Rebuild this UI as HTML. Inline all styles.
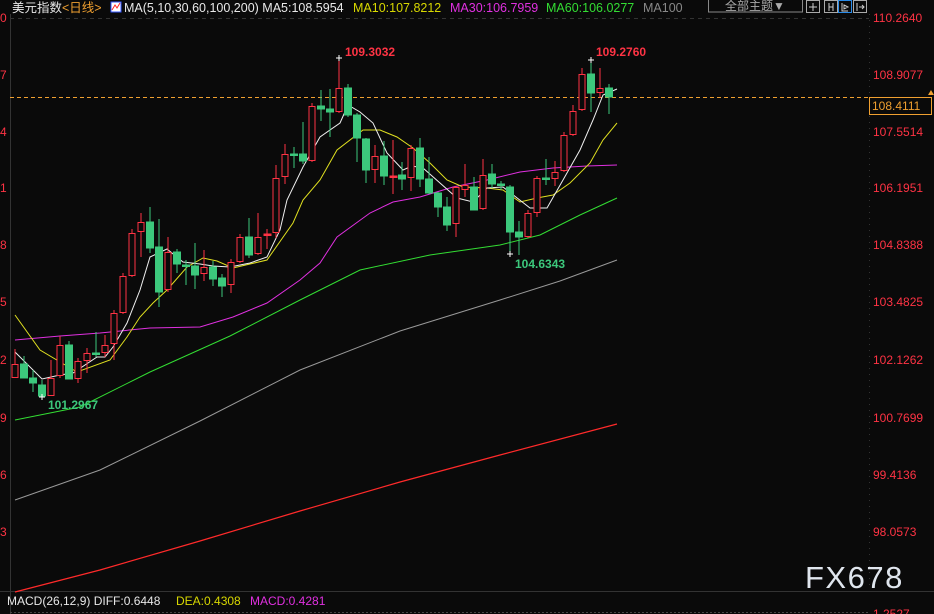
<!DOCTYPE html>
<html><head><meta charset="utf-8"><style>
html,body{margin:0;padding:0;background:#0a0a0a;width:934px;height:614px;overflow:hidden}
svg{display:block}
text{font-family:"Liberation Sans","Noto Sans CJK SC",sans-serif}
</style></head><body>
<svg width="934" height="614" viewBox="0 0 934 614" xmlns="http://www.w3.org/2000/svg">
<rect width="934" height="614" fill="#0a0a0a"/>
<text x="12" y="12" font-size="12.5" fill="#e8e8e8">美元指数</text>
<text x="62" y="12" font-size="12.5" fill="#f0a030">&lt;日线&gt;</text>
<rect x="111" y="2" width="10" height="10" fill="#fff" stroke="#3355ff"/>
<polyline points="112,10 115,5 117,8 120,3" fill="none" stroke="#ff2222"/>
<text x="124" y="12" font-size="12.5" fill="#e8e8e8">MA(5,10,30,60,100,200) MA5:108.5954</text>
<text x="353" y="12" font-size="12.5" fill="#d8d800">MA10:107.8212</text>
<text x="450" y="12" font-size="12.5" fill="#e030e0">MA30:106.7959</text>
<text x="546" y="12" font-size="12.5" fill="#33dd33">MA60:106.0277</text>
<text x="643" y="12" font-size="12.5" fill="#888">MA100</text>
<rect x="708.5" y="-1" width="94" height="13" fill="none" stroke="#888"/>
<text x="725" y="10" font-size="12" fill="#aaa">全部主题▼</text>
<rect x="806.5" y="0.5" width="13" height="12" fill="none" stroke="#aaa"/>
<rect x="824.5" y="0.5" width="13" height="12" fill="none" stroke="#aaa"/>
<rect x="838.5" y="0.5" width="13" height="12" fill="#0a0a0a" stroke="#2a8be8"/>
<rect x="853.5" y="0.5" width="13" height="12" fill="none" stroke="#aaa"/>
<path d="M813 3v8M809 7h8M829 3v8M833 3v8M829 7h4M842 3v8h6M844 5l4 2-4 2z" stroke="#ccc" fill="none"/>
<path d="M857 3v8M859 7h5M862 5l2 2-2 2" stroke="#ccc" fill="none"/>
<line x1="10.5" y1="14" x2="10.5" y2="614" stroke="#333"/>
<line x1="869.5" y1="14" x2="869.5" y2="590" stroke="#333" stroke-dasharray="1,5"/>
<line x1="10" y1="18.5" x2="869" y2="18.5" stroke="#333" stroke-dasharray="4,4"/>
<line x1="0" y1="591.5" x2="934" y2="591.5" stroke="#333"/>
<line x1="10" y1="612.5" x2="869" y2="612.5" stroke="#444" stroke-dasharray="2,2"/>
<g font-size="12" fill="#ff3344">
<text x="0" y="22">0</text><text x="0" y="79">7</text><text x="0" y="136">4</text><text x="0" y="192">1</text><text x="0" y="249">8</text><text x="0" y="306">5</text><text x="0" y="364">2</text><text x="0" y="422">9</text><text x="0" y="479">6</text><text x="0" y="536">3</text>
<text x="873" y="22">110.2640</text><text x="873" y="79">108.9077</text><text x="873" y="136">107.5514</text><text x="873" y="192">106.1951</text><text x="873" y="249">104.8388</text><text x="873" y="306">103.4825</text><text x="873" y="364">102.1262</text><text x="873" y="422">100.7699</text><text x="873" y="479">99.4136</text><text x="873" y="536">98.0573</text><text x="873" y="618">1.2527</text>
</g>
<line x1="10" y1="97.5" x2="869" y2="97.5" stroke="#f0a030" stroke-dasharray="4,3"/>
<rect x="869.5" y="97.5" width="62" height="17" fill="#0a0a0a" stroke="#f0a030"/>
<text x="872" y="110" font-size="12" fill="#f0a030">108.4111</text>
<path d="M928 95l3-5 3 5z" fill="#f0a030"/>
<polyline fill="none" stroke="#ff2a2a" stroke-width="1.2" points="15,592 100,570 200,541 300,511 400,482 500,455 617,424"/>
<polyline fill="none" stroke="#999" stroke-width="1" points="15,500 100,470 200,421 300,370 400,331 500,300 560,281 617,260"/>
<polyline fill="none" stroke="#33dd33" stroke-width="1" points="15,420 80,407 150,372 230,336 300,300 360,270 430,255 500,245 540,235 580,215 617,198"/>
<polyline fill="none" stroke="#e030e0" stroke-width="1" points="15,340 60,336 100,333 150,328 200,327 233,317 267,303 300,280 320,263 337,237 370,213 393,202 420,197 453,187 487,180 520,172 553,168 587,166 617,165"/>
<polyline fill="none" stroke="#e0e020" stroke-width="1" points="15,315 40,350 77,372 110,360 127,337 140,317 153,303 167,290 187,267 203,258 217,261 233,268 267,260 293,223 303,200 320,180 337,150 363,130 380,130 397,137 413,148 430,163 447,180 463,187 487,188 503,190 520,202 537,198 553,195 570,183 590,163 603,140 617,123"/>
<polyline fill="none" stroke="#f0f0f0" stroke-width="1" points="15,352 42,379 60,375 73,373 97,357 105,357 113,347 127,323 140,290 150,257 167,249 183,262 200,264 213,266 230,267 250,263 267,257 280,230 287,200 303,167 320,137 340,123 348,105 360,112 373,123 387,153 403,170 412,166 423,168 440,183 457,198 473,202 487,188 503,187 530,208 547,208 563,180 580,150 593,120 603,95 617,89"/>
<g stroke-width="1">
<g stroke="#ff3344" fill="#0a0a0a">
<line x1="15" y1="349" x2="15" y2="378"/><rect x="12" y="364.5" width="6" height="13"/>
<line x1="51" y1="360" x2="51" y2="396"/><rect x="48" y="378.5" width="6" height="17"/>
<line x1="60" y1="336" x2="60" y2="378"/><rect x="57" y="345.5" width="6" height="30"/>
<line x1="78" y1="358" x2="78" y2="383"/><rect x="75" y="361.5" width="6" height="17"/>
<line x1="87" y1="348" x2="87" y2="373"/><rect x="84" y="353.5" width="6" height="7"/>
<line x1="105" y1="335" x2="105" y2="357"/><rect x="102" y="345.5" width="6" height="7"/>
<line x1="114" y1="310" x2="114" y2="360"/><rect x="111" y="313.5" width="6" height="30"/>
<line x1="123" y1="273" x2="123" y2="314"/><rect x="120" y="276.5" width="6" height="36"/>
<line x1="132" y1="229" x2="132" y2="277"/><rect x="129" y="233.5" width="6" height="42"/>
<line x1="141" y1="213" x2="141" y2="257"/><rect x="138" y="222.5" width="6" height="9"/>
<line x1="168" y1="237" x2="168" y2="292"/><rect x="165" y="252.5" width="6" height="37"/>
<line x1="204" y1="250" x2="204" y2="281"/><rect x="201" y="267.5" width="6" height="6"/>
<line x1="231" y1="259" x2="231" y2="293"/><rect x="228" y="262.5" width="6" height="22"/>
<line x1="240" y1="234" x2="240" y2="263"/><rect x="237" y="237.5" width="6" height="24"/>
<line x1="258" y1="213" x2="258" y2="255"/><rect x="255" y="237.5" width="6" height="16"/>
<line x1="267" y1="229" x2="267" y2="249"/><rect x="264" y="234" width="7" height="1.5" fill="#ff3344"/>
<line x1="276" y1="165" x2="276" y2="238"/><rect x="273" y="178.5" width="6" height="54"/>
<line x1="285" y1="144" x2="285" y2="184"/><rect x="282" y="154.5" width="6" height="22"/>
<line x1="312" y1="103" x2="312" y2="162"/><rect x="309" y="106.5" width="6" height="54"/>
<line x1="339" y1="58" x2="339" y2="113"/><rect x="336" y="88.5" width="6" height="23"/>
<line x1="375" y1="145" x2="375" y2="183"/><rect x="372" y="156.5" width="6" height="13"/>
<line x1="393" y1="140" x2="393" y2="194"/><rect x="390" y="176" width="7" height="1.5" fill="#ff3344"/>
<line x1="411" y1="145" x2="411" y2="191"/><rect x="408" y="148.5" width="6" height="29"/>
<line x1="456" y1="186" x2="456" y2="237"/><rect x="453" y="187.5" width="6" height="36"/>
<line x1="465" y1="164" x2="465" y2="197"/><rect x="462" y="185.5" width="6" height="4"/>
<line x1="483" y1="159" x2="483" y2="210"/><rect x="480" y="175.5" width="6" height="33"/>
<line x1="528" y1="210" x2="528" y2="238"/><rect x="525" y="213.5" width="6" height="23"/>
<line x1="537" y1="176" x2="537" y2="217"/><rect x="534" y="178.5" width="6" height="34"/>
<line x1="555" y1="161" x2="555" y2="186"/><rect x="552" y="172.5" width="6" height="6"/>
<line x1="564" y1="132" x2="564" y2="172"/><rect x="561" y="135.5" width="6" height="35"/>
<line x1="573" y1="105" x2="573" y2="136"/><rect x="570" y="111.5" width="6" height="23"/>
<line x1="582" y1="68" x2="582" y2="111"/><rect x="579" y="74.5" width="6" height="35"/>
<line x1="600" y1="68" x2="600" y2="98"/><rect x="597" y="88.5" width="6" height="4"/>
</g>
<g stroke="#3cc87c" fill="#3cc87c">
<line x1="24" y1="356" x2="24" y2="378"/><rect x="20.5" y="364" width="7" height="14"/>
<line x1="33" y1="370" x2="33" y2="392"/><rect x="29.5" y="378" width="7" height="5"/>
<line x1="42" y1="380" x2="42" y2="397"/><rect x="38.5" y="385" width="7" height="11"/>
<line x1="69" y1="341" x2="69" y2="379"/><rect x="65.5" y="345" width="7" height="34"/>
<line x1="96" y1="332" x2="96" y2="357"/><rect x="92.5" y="353" width="7" height="1.5"/>
<line x1="150" y1="207" x2="150" y2="253"/><rect x="146.5" y="222" width="7" height="26"/>
<line x1="159" y1="219" x2="159" y2="307"/><rect x="155.5" y="247" width="7" height="45"/>
<line x1="177" y1="249" x2="177" y2="273"/><rect x="173.5" y="252" width="7" height="12"/>
<line x1="186" y1="260" x2="186" y2="285"/><rect x="182.5" y="265" width="7" height="1.5"/>
<line x1="195" y1="243" x2="195" y2="289"/><rect x="191.5" y="266" width="7" height="9"/>
<line x1="213" y1="261" x2="213" y2="286"/><rect x="209.5" y="267" width="7" height="12"/>
<line x1="222" y1="274" x2="222" y2="297"/><rect x="218.5" y="278" width="7" height="8"/>
<line x1="249" y1="218" x2="249" y2="258"/><rect x="245.5" y="237" width="7" height="18"/>
<line x1="294" y1="147" x2="294" y2="168"/><rect x="290.5" y="154" width="7" height="1.5"/>
<line x1="303" y1="122" x2="303" y2="164"/><rect x="299.5" y="154" width="7" height="7"/>
<line x1="321" y1="90" x2="321" y2="121"/><rect x="317.5" y="106" width="7" height="3"/>
<line x1="330" y1="89" x2="330" y2="137"/><rect x="326.5" y="109" width="7" height="3"/>
<line x1="348" y1="84" x2="348" y2="117"/><rect x="344.5" y="88" width="7" height="27"/>
<line x1="357" y1="113" x2="357" y2="162"/><rect x="353.5" y="115" width="7" height="23"/>
<line x1="366" y1="138" x2="366" y2="183"/><rect x="362.5" y="139" width="7" height="31"/>
<line x1="384" y1="141" x2="384" y2="185"/><rect x="380.5" y="156" width="7" height="20"/>
<line x1="402" y1="162" x2="402" y2="190"/><rect x="398.5" y="175" width="7" height="4"/>
<line x1="420" y1="138" x2="420" y2="187"/><rect x="416.5" y="148" width="7" height="31"/>
<line x1="429" y1="157" x2="429" y2="194"/><rect x="425.5" y="179" width="7" height="14"/>
<line x1="438" y1="192" x2="438" y2="217"/><rect x="434.5" y="193" width="7" height="14"/>
<line x1="447" y1="197" x2="447" y2="231"/><rect x="443.5" y="207" width="7" height="18"/>
<line x1="474" y1="177" x2="474" y2="210"/><rect x="470.5" y="187" width="7" height="23"/>
<line x1="492" y1="164" x2="492" y2="188"/><rect x="488.5" y="174" width="7" height="10"/>
<line x1="501" y1="181" x2="501" y2="190"/><rect x="497.5" y="184" width="7" height="1.5"/>
<line x1="510" y1="185" x2="510" y2="254"/><rect x="506.5" y="187" width="7" height="45"/>
<line x1="519" y1="221" x2="519" y2="255"/><rect x="515.5" y="232" width="7" height="5"/>
<line x1="546" y1="159" x2="546" y2="185"/><rect x="542.5" y="178" width="7" height="1.5"/>
<line x1="591" y1="60" x2="591" y2="112"/><rect x="587.5" y="74" width="7" height="19"/>
<line x1="609" y1="84" x2="609" y2="114"/><rect x="605.5" y="88" width="7" height="9"/>
</g>
</g>
<g stroke="#fff"><path d="M336 58h6M339 55v6M588 60h6M591 57v6M507 254h6M510 251v6M39 397h6M42 394v6"/></g>
<text x="345" y="56" font-size="12" font-weight="bold" fill="#ff3344">109.3032</text>
<text x="596" y="56" font-size="12" font-weight="bold" fill="#ff3344">109.2760</text>
<text x="515" y="268" font-size="12" font-weight="bold" fill="#3cc87c">104.6343</text>
<text x="48" y="409" font-size="12" font-weight="bold" fill="#3cc87c">101.2967</text>
<text x="805" y="588" font-size="31" fill="#e0e6ee" letter-spacing="1.5">FX678</text>
<text x="7" y="605" font-size="12" fill="#e8e8e8">MACD(26,12,9) DIFF:0.6448</text>
<text x="176" y="605" font-size="12" fill="#d8d800">DEA:0.4308</text>
<text x="250" y="605" font-size="12" fill="#e030e0">MACD:0.4281</text>
</svg>
</body></html>
